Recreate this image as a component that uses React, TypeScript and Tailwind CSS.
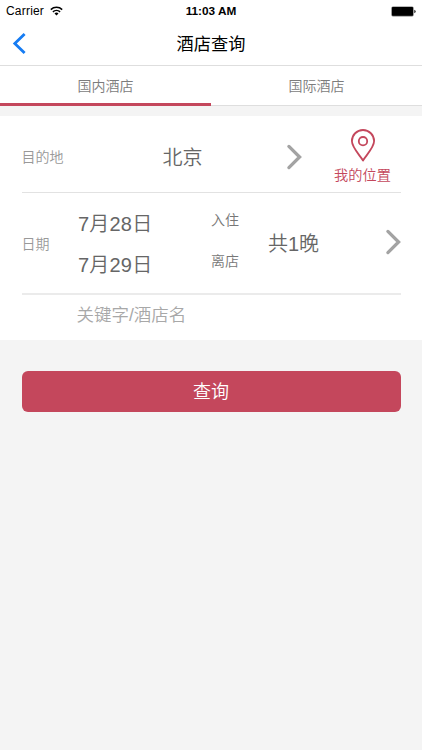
import React from "react";

function WifiIcon() {
  return (
    <svg width="13" height="10" viewBox="0 0 13 10" className="ml-[6px]">
      <g fill="none" stroke="#000" strokeWidth="1.5">
        <path d="M0.8 3.6A8.3 8.3 0 0 1 12.2 3.6" />
        <path d="M2.9 5.9A5.2 5.2 0 0 1 10.1 5.9" />
      </g>
      <path d="M6.5 9.6L4.5 7.5A2.9 2.9 0 0 1 8.5 7.5Z" />
    </svg>
  );
}

function BatteryIcon() {
  return (
    <svg width="26" height="11" viewBox="0 0 26 11">
      <rect x="0.3" y="0.4" width="22.4" height="10" rx="1.6" fill="#777" />
      <rect x="1" y="1.1" width="21" height="8.6" rx="0.8" />
      <path d="M23.4 3.8a1.8 1.8 0 0 1 0 3.4z" />
    </svg>
  );
}

function Chevron() {
  return (
    <svg width="16" height="26" viewBox="0 0 16 26">
      <path d="M2.9 2.4L13.6 13L2.9 23.6" fill="none" stroke="#a3a3a3" strokeWidth="3.3" strokeLinecap="round" />
    </svg>
  );
}

function StatusBar() {
  return (
    <div className="grid h-[22px] grid-cols-3 items-center text-[12px] leading-none text-black">
      <div className="flex items-center pl-[6px]">
        <span className="tracking-[0.2px]">Carrier</span>
        <WifiIcon />
      </div>
      <span className="pt-px text-center text-[11.8px] font-bold">11:03 AM</span>
      <div className="flex justify-end pr-[5px]">
        <BatteryIcon />
      </div>
    </div>
  );
}

export default function App() {
  return (
    <div className="flex h-[750px] w-[422px] flex-col overflow-hidden bg-[#f4f4f4] font-['Liberation_Sans','Noto_Sans_CJK_SC',sans-serif] font-[350] whitespace-nowrap">
      <header className="h-[66px] border-b border-[#dedede] bg-white">
        <StatusBar />
        <div className="grid h-[43px] grid-cols-[60px_1fr_60px] items-center">
          <button className="pl-[10px]" aria-label="返回">
            <svg width="16" height="24" viewBox="0 0 16 24">
              <path d="M14.6 2L4.8 11.5L14.6 21" fill="none" stroke="#167cf3" strokeWidth="2.8" />
            </svg>
          </button>
          <h1 className="pt-[2px] text-center text-[17.2px] font-normal leading-none text-black">酒店查询</h1>
        </div>
      </header>

      <nav className="grid h-[40px] grid-cols-2 bg-white text-[14px] leading-none text-[#7c7c7c]">
        <div className="flex items-center justify-center border-b-3 border-[#c4475c] pt-[3px]">国内酒店</div>
        <div className="flex items-center justify-center border-b border-[#dedede] pt-px">国际酒店</div>
      </nav>

      <main className="mt-[10px] bg-white px-[21.5px]">
        <section className="flex h-[77px] items-center border-b border-[#e2e2e2]">
          <span className="w-[141px] pt-[6px] text-[14px] leading-none text-[#999]">目的地</span>
          <span className="w-[123px] pt-[7px] text-[20px] leading-none text-[#666]">北京</span>
          <span className="pt-[5px]"><Chevron /></span>
          <div className="ml-auto flex w-[76px] flex-col items-center pt-[4px] text-[#c4475c]">
            <svg width="26" height="33" viewBox="0 0 26 33" fill="none" stroke="currentColor" strokeWidth="1.8" strokeLinejoin="round">
              <path d="M13 31.5C10.4 26.8 1.9 18.8 1.9 12.1a11.1 11.1 0 0 1 22.2 0C24.1 18.8 15.6 26.8 13 31.5Z" />
              <circle cx="13" cy="12.2" r="4.2" />
            </svg>
            <span className="mt-[6px] text-[14.2px] leading-none">我的位置</span>
          </div>
        </section>

        <section className="flex h-[102px] items-center border-b-2 border-[#ebebeb]">
          <span className="w-[56.5px] pt-[2px] text-[14px] leading-none text-[#999]">日期</span>
          <div className="flex w-[133px] flex-col gap-[21px] pt-[3px] text-[20px] leading-[20px] tracking-[0.2px] text-[#666]">
            <span>7月28日</span>
            <span>7月29日</span>
          </div>
          <div className="flex w-[57px] flex-col gap-[27px] pb-[5px] text-[14px] leading-[14px] text-[#777]">
            <span>入住</span>
            <span>离店</span>
          </div>
          <span className="pt-[2px] text-[20px] leading-none text-[#666]">共1晚</span>
          <span className="ml-auto pb-[2px]"><Chevron /></span>
        </section>

        <div className="flex h-[45px] items-center pb-[4px] pl-[55px] text-[17.5px] leading-none text-[#a8a8a8]">
          关键字/酒店名
        </div>
      </main>

      <button className="mx-[21.5px] mt-[31px] flex h-[40.5px] items-center justify-center rounded-[6px] bg-[#c4475c] pt-px text-[18px] leading-none text-white">
        查询
      </button>
    </div>
  );
}
